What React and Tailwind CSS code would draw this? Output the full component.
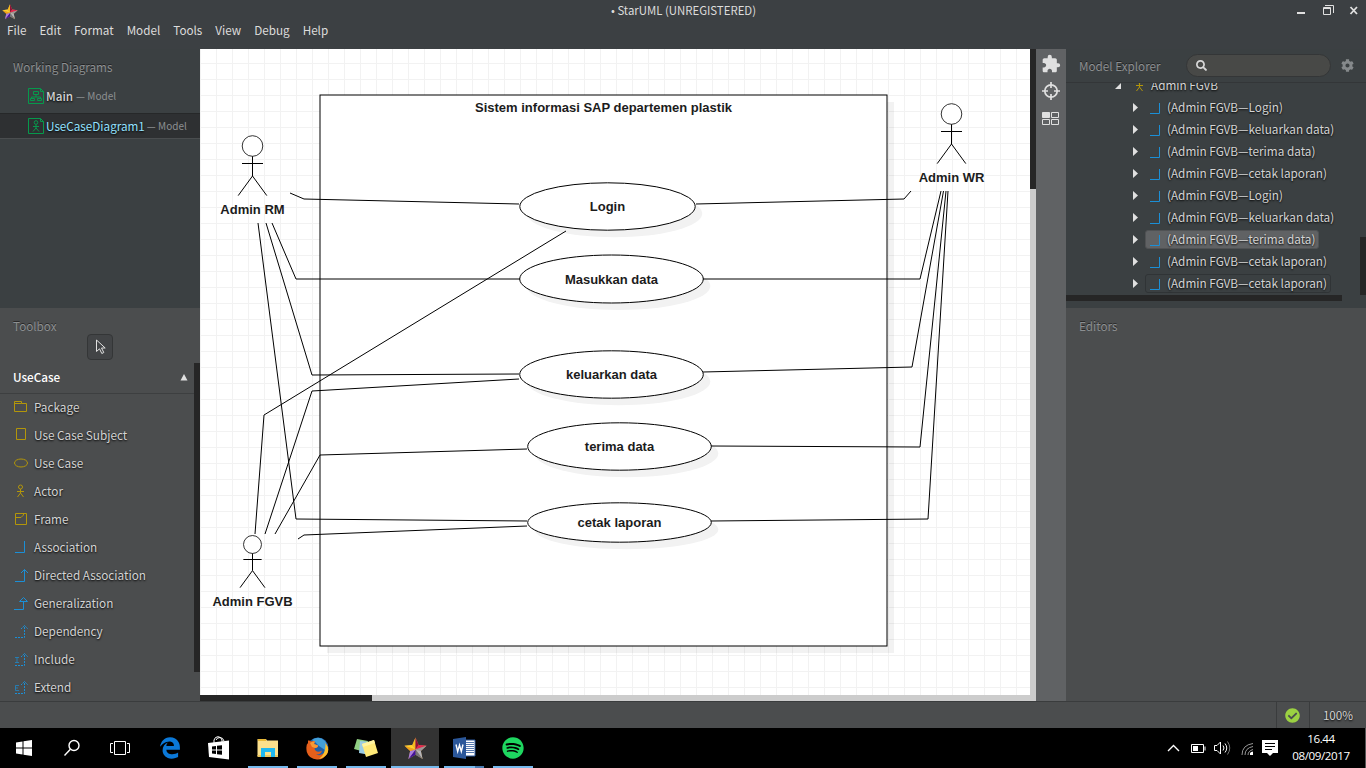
import React from "react";
import { FaSpotify, FaCheckCircle, FaCog, FaSearch } from "react-icons/fa";
import { FaEdgeLegacy } from "react-icons/fa6";
import { MdExtension } from "react-icons/md";

const ui = "font-['Noto_Sans_CJK_JP','Noto_Sans',sans-serif]";

function Star({ size }) {
  return (
    <svg width={size} height={size} viewBox="0 0 24 24">
      <path d="M12 .5L15.400 8.300L23.500 9.200L17.600 14.700L19.400 23L12 18.600L4.600 23L6.400 14.700L.5 9.200L8.600 8.300Z" fill="#b08a4a" />
      <path d="M12 .5V13L8.600 8.300Z" fill="#f5b91f" />
      <path d="M12 .5L15.400 8.300L12 13Z" fill="#8f1038" />
      <path d="M15.400 8.300L23.500 9.200L12 13Z" fill="#e8234f" />
      <path d="M23.500 9.200L17.600 14.700L12 13Z" fill="#9c9599" />
      <path d="M17.600 14.700L19.400 23L12 13Z" fill="#b5b5ba" />
      <path d="M19.400 23L12 18.600V13Z" fill="#74747a" />
      <path d="M12 18.600L4.600 23L12 13Z" fill="#42139c" />
      <path d="M4.600 23L6.400 14.700L12 13Z" fill="#a77be0" />
      <path d="M6.400 14.700L.5 9.200L12 13Z" fill="#f5a018" />
      <path d="M.5 9.200L8.600 8.300L12 13Z" fill="#ffd12b" />
    </svg>
  );
}

function DiagramIcon({ children }) {
  return (
    <svg className="shrink-0" width="16" height="16" viewBox="0 0 16 16" fill="none" stroke="#06994c">
      <path d="M.5 .5H12.5L15.5 3.5V15.5H.5ZM12.5 .5V3.5H15.5" />
      {children}
    </svg>
  );
}

const toolIcons = {
  Package: <path d="M.5 10.5V.5H7.5V2.5H12.5V10.5ZM.5 2.5H7.5" transform="translate(0 1)" />,
  "Use Case Subject": <path d="M2.5 .5H11.5V11.5H2.5Z" />,
  "Use Case": <ellipse cx="7" cy="7" rx="6.5" ry="4" />,
  Actor: (
    <>
      <circle cx="6.5" cy="3" r="2" />
      <path d="M6.5 5V9M3 7.5H10M6.5 9L3.5 13M6.5 9L9.5 13" />
    </>
  ),
  Frame: <path d="M1.5 1.5H12.5V12.5H1.5ZM1.5 5.5H7L9.5 3V1.5" />,
  Association: <path d="M1 12.5H10.5V1" />,
  "Directed Association": <path d="M1 13.5H10.5V1.5M7 5L10.5 1.5L14 5" />,
  Generalization: <path d="M0 13.5H9.5V5.5M5.5 5.5H13.5L9.5 1.5Z" />,
  Dependency: <path d="M1 13.5H10.5V1.5M7 5L10.5 1.5L14 5" strokeDasharray="2 1" />,
  Include: (
    <>
      <path d="M1 13.5H10.5V1.5M7 5L10.5 1.5L14 5" strokeDasharray="2 1" />
      <path d="M1 5.5H5M3 5.5V10.5M1 10.5H5" opacity=".7" />
    </>
  ),
  Extend: (
    <>
      <path d="M1 13.5H10.5V1.5M7 5L10.5 1.5L14 5" strokeDasharray="2 1" />
      <path d="M5 5.5H1.5V10.5H5M1.5 8H4" opacity=".7" />
    </>
  ),
};
const classifiers = ["Package", "Use Case Subject", "Use Case", "Actor", "Frame"];

const tree = [
  "Login", "keluarkan data", "terima data", "cetak laporan", "Login",
  "keluarkan data", "terima data", "cetak laporan", "cetak laporan",
];

function Actor({ x, y, s = 1, label, ly }) {
  return (
    <g>
      <circle cx={x} cy={y} r={10.3 * s} fill="#fff" strokeWidth=".8" />
      <path fill="none" d={`M${x} ${y + 10.3 * s}V${y + 30 * s}M${x - 10.5 * s} ${Math.floor(y + 17.3 * s) + 0.5}H${x + 10.5 * s}M${x - 14.3 * s} ${y + 49.6 * s}L${x} ${y + 30 * s}L${x + 14.3 * s} ${y + 49.6 * s}`} />
      <text x={x} y={ly} stroke="none">{label}</text>
    </g>
  );
}

const cases = [
  ["Login", 607.5, 206.5, 87.7, 23.7],
  ["Masukkan data", 611.5, 279, 91.8, 24],
  ["keluarkan data", 611.5, 374.5, 91.8, 23.7],
  ["terima data", 619.5, 446.5, 91.8, 23.7],
  ["cetak laporan", 619.5, 522.5, 91.8, 19.7],
];

const links = [
  "290,193 304,199 519,204", "272,223 296,279 520,279", "266,223 312,375 519,374",
  "258,223 296,519 527,521", "255,534 264,415 566,231", "265,534 312,391 519,379",
  "275,534 320,455 527,449", "298,539 304,535 527,526", "911,191 904,199 696,204",
  "941,191 920,279 703,279", "943.5,191 912,367 703,372", "946,191 920,447 711,446",
  "948,191 928,519 711,521",
];

function Diagram() {
  return (
    <svg width="830" height="646" viewBox="200 49 830 646" fill="none" stroke="#000" textAnchor="middle" className="block bg-white font-['Liberation_Sans',sans-serif] text-[13px] font-bold">
      <defs>
        <pattern id="grid" x="200" y="47" width="16" height="16" patternUnits="userSpaceOnUse">
          <path d="M0 .5H16M.5 0V16" stroke="#f2f2f2" />
        </pattern>
      </defs>
      <rect x="200" y="49" width="830" height="646" fill="url(#grid)" stroke="none" />
      <rect x="327" y="102" width="567" height="551" fill="#000" fillOpacity=".05" stroke="none" />
      <rect x="320" y="95" width="567" height="551" fill="#fff" />
      <text x="603.5" y="112" fill="#1c1c1c" stroke="none">Sistem informasi SAP departemen plastik</text>
      {cases.map(([name, x, y, rx, ry]) => (
        <g key={name}>
          <ellipse cx={x + 7} cy={y + 7} rx={rx} ry={ry} fill="#f2f2f2" stroke="none" />
          <ellipse cx={x} cy={y} rx={rx} ry={ry} fill="#fff" />
          <text x={x} y={Math.round(y + 4.5)} fill="#1c1c1c" stroke="none">{name}</text>
        </g>
      ))}
      {links.map((p) => <polyline key={p} points={p} />)}
      <g fill="#1c1c1c">
        <Actor x={252.5} y={146} label="Admin RM" ly={214} />
        <Actor x={951.5} y={114} label="Admin WR" ly={182} />
        <Actor x={252.5} y={544.5} s={0.87} label="Admin FGVB" ly={606} />
      </g>
    </svg>
  );
}

function Task({ w, active, open, split, children }) {
  return (
    <div className={`flex h-10 flex-col items-center ${w} ${active ? "bg-[#333]" : ""}`}>
      <div className="flex h-[38px] items-center justify-center pt-0.5">{children}</div>
      {open && (
        <div className={`flex h-0.5 bg-[#76b9ed] ${active ? "w-12" : "w-10"}`}>
          {split && <div className="ml-[31px] w-[9px] bg-[#4a7bb0]" />}
        </div>
      )}
    </div>
  );
}

export default function App() {
  return (
    <div className={`flex h-[768px] w-[1366px] flex-col overflow-hidden bg-[#3c4043] text-[13px] leading-5 text-[#d4d4d4] ${ui}`}>
      <header className="h-[49px]">
        <div className="flex h-5 items-start">
          <div className="w-[70px] pt-1 pl-0.5"><Star size={16} /></div>
          <div className="flex-1 pl-px text-center text-[11.400px] text-[#dcdcdc]">• StarUML (UNREGISTERED)</div>
          <svg className="mt-1" width="70" height="14" viewBox="0 0 70 14" fill="none" stroke="#e0e0e0">
            <path d="M1 9H9" strokeWidth="2" />
            <path d="M27.500 3.500H34.500V10.500H27.500ZM27 4.500H35M29 1.500H37.500V9" />
            <path d="M54.500 3L61 10M61 3L54.500 10" strokeWidth="1.800" />
          </svg>
        </div>
        <nav className="flex gap-[13px] pl-[7px] text-[11.700px] text-[#dcdcdc]">
          {["File", "Edit", "Format", "Model", "Tools", "View", "Debug", "Help"].map((m) => <span key={m}>{m}</span>)}
        </nav>
      </header>

      <main className="flex h-[652px]">
        <aside className="flex w-[200px] flex-col">
          <section className="h-[259px] bg-[#3b4042]">
            <h2 className="h-8 pt-2 pl-[13px] text-[11.700px] text-[#8c8f91] [text-shadow:0_-1px_0_#222]">Working Diagrams</h2>
            <div className="flex h-8 items-center pl-7 pb-0.5">
              <DiagramIcon><path d="M5.500 3.500H10.500V6.500H5.500ZM8 6.500V9M3.500 11V9H12.500V11M2.500 10.500H6.500V12.500H2.500ZM9.500 10.500H13.500V12.500H9.500Z" /></DiagramIcon>
              <span className="-mt-px ml-0.5 text-[11.700px] font-medium [text-shadow:0_1px_2px_#000]">Main</span>
              <span className="ml-[3px] text-[10px] text-[#8c8f91]">— Model</span>
            </div>
            <div className="flex h-[26px] items-center border-y border-t-[#262829] border-b-[#4a4d4f] bg-[#2e3032] pl-7">
              <DiagramIcon><circle cx="8" cy="4.500" r="1.800" /><path d="M8 6.500V10M5 8.500H11M8 10L5 13.500M8 10L11 13.500" /></DiagramIcon>
              <span className="-mt-px ml-0.5 text-[11.700px] text-[#94e2ff] [text-shadow:0_1px_2px_#000]">UseCaseDiagram1</span>
              <span className="ml-[2px] text-[10px] text-[#8c8f91]">— Model</span>
            </div>
          </section>
          <section className="h-[393px] bg-[#4b4d4e]">
            <h2 className="h-[26px] pt-2 pl-[13px] text-[11.700px] text-[#8c8f91] [text-shadow:0_-1px_0_#292929]">Toolbox</h2>
            <div className="flex h-[29px] justify-center">
              <div className="flex h-[26px] w-[26px] items-center justify-center rounded border border-[#343637] bg-[#424446] pl-0.5">
                <svg width="12" height="16" viewBox="0 0 12 16" fill="none" stroke="#e0e0e0"><path d="M1.500 1V12.500L4.500 9.800L6.800 14.500L8.800 13.500L6.500 9H10.200Z" /></svg>
              </div>
            </div>
            <div className="flex h-[338px]">
              <div className="w-[194px]">
                <div className="flex h-[30px] items-center justify-between pr-1.5 pb-0.5 pl-[13px] text-[11.700px] font-medium text-white">
                  UseCase<svg width="8" height="7"><path d="M4 0L7.500 6.500H.5Z" fill="#e0e0e0" /></svg>
                </div>
                <div className="h-px bg-[#3d3f40]" />
                {Object.keys(toolIcons).map((name) => (
                  <div key={name} className="flex h-7 items-center pl-[14px]">
                    <svg className="-mt-px mr-1.5 shrink-0" width="14" height="15" viewBox="0 0 14 15" fill="none" stroke={classifiers.includes(name) ? "#b3960a" : "#1b8fd6"}>{toolIcons[name]}</svg>
                    <span className="-mt-0.5 text-[11.750px] [text-shadow:0_1px_2px_#000]">{name}</span>
                  </div>
                ))}
              </div>
              <div className="h-[309px] w-1.5 bg-[#262626]" />
            </div>
          </section>
        </aside>

        <section className="flex w-[836px] flex-col">
          <div className="flex">
            <Diagram />
            <div className="w-1.5 bg-[#ccc]"><div className="h-[140px] bg-[#262626]" /></div>
          </div>
          <div className="h-1.5 bg-[#ccc]"><div className="h-full w-[172px] bg-[#262626]" /></div>
        </section>

        <div className="flex w-[30px] flex-col items-center bg-[#606264] pt-[5px] text-[#e0e0e0]">
          <MdExtension className="size-5" />
          <svg className="mt-2" width="18" height="18" viewBox="0 0 18 18" fill="none" stroke="#e0e0e0" strokeWidth="1.700">
            <circle cx="9" cy="9" r="6.200" /><path d="M9 0V6M9 12V18M0 9H6M12 9H18" />
          </svg>
          <svg className="mt-3" width="18" height="14" viewBox="0 0 18 14" fill="none" stroke="#e0e0e0">
            <path d="M.5 .5H7.500V5.500H.5Z" fill="#e0e0e0" /><path d="M9.500 .5H16.500V5.500H9.500ZM.5 7.500H7.500V12.500H.5ZM9.500 7.500H16.500V12.500H9.500Z" />
          </svg>
        </div>

        <aside className="flex w-[300px] flex-col">
          <section className="flex h-[259px] flex-col bg-[#3b4042]">
            <div className="flex h-[34px] items-center border-b border-[#333638] pl-[13px]">
              <h2 className="w-[107px] text-[11.700px] text-[#8c8f91] [text-shadow:0_-1px_0_#222]">Model Explorer</h2>
              <div className="flex h-[23px] w-[145px] items-center rounded-full border border-[#343637] bg-[#484947] pl-[9px] text-[#d8d8d8]"><FaSearch className="size-[11px]" /></div>
              <FaCog className="ml-2.5 size-[13px] text-[#85898b]" />
            </div>
            <div className="flex h-[212px] overflow-hidden">
              <div className="w-[294px] text-[11.750px] [text-shadow:0_1px_2px_#000]">
                <div className="-mt-[9px] flex h-[22px] items-center pl-[49px]">
                  <svg className="mt-0.5" width="6" height="6"><path d="M6 0V6H0Z" fill="#e0e0e0" /></svg>
                  <svg className="ml-[12px] mr-[6px]" width="12" height="14" fill="none" stroke="#b3960a">{toolIcons.Actor}</svg>
                  Admin FGVB
                </div>
                {tree.map((t, i) => (
                  <div key={i} className="flex h-[22px] items-center pl-[67px]">
                    <svg width="5" height="9"><path d="M0 0L5 4.500L0 9Z" fill="#e0e0e0" /></svg>
                    <div className={`mt-px ml-[7px] flex h-[19px] items-center rounded-[3px] border pr-[3px] pb-px pl-1 ${i === 6 ? "border-[#505254] bg-[#606264]" : i === 8 ? "border-[#303436]" : "border-transparent"}`}>
                      <svg className="mt-px mr-[6px]" width="11" height="12" fill="none" stroke="#1b8fd6"><path d="M0 11.500H9.500V1" /></svg>
                      {`(Admin FGVB—${t})`}
                    </div>
                  </div>
                ))}
              </div>
              <div className="flex w-1.5 items-end"><div className="h-[58px] w-full bg-[#262626]" /></div>
            </div>
            <div className="h-1.5 w-[276px] bg-[#262626]" />
          </section>
          <section className="h-[393px] bg-[#4b4d4e]">
            <h2 className="pt-2 pl-[13px] text-[11.700px] text-[#8c8f91] [text-shadow:0_-1px_0_#292929]">Editors</h2>
          </section>
        </aside>
      </main>

      <footer className="flex h-[27px] justify-end border-t border-[#3a3c3d] bg-[#4b4d4e]">
        <div className="flex w-[33px] items-center justify-center border-l border-[#3a3c3d] pr-px"><FaCheckCircle className="size-[15px] text-[#9bd142]" /></div>
        <div className="flex w-[57px] items-center justify-center border-l border-[#3a3c3d] pb-px text-[11.700px]"><span className="[text-shadow:0_1px_2px_#000]">100%</span></div>
      </footer>

      <div className="flex h-10 bg-black">
        <Task w="w-12"><svg width="16" height="16" fill="#fff"><path d="M0 2.500L6.500 1.500V7.500H0ZM7.500 1.300L16 0V7.500H7.500ZM0 8.500H6.500V14.500L0 13.500ZM7.500 8.500H16V16L7.500 14.700Z" /></svg></Task>
        <Task w="w-12"><svg width="18" height="18" fill="none" stroke="#fff" strokeWidth="1.400"><circle cx="11" cy="6.500" r="5" /><path d="M7.400 10.200L1.500 16.500" /></svg></Task>
        <Task w="w-12"><svg width="20" height="16" fill="none" stroke="#fff"><path d="M4.500 1.500H15.500V14.500H4.500ZM3 3.500H.5V12.500H3M17 3.500H19.500V12.500H17" /></svg></Task>
        <Task w="w-[51px]"><FaEdgeLegacy className="size-[22px] text-[#0b78d7]" /></Task>
        <Task w="w-12">
          <svg width="22" height="24" viewBox="0 0 22 24"><path d="M0 7L21 4.500V23.500L1 21Z" fill="#fff" /><path d="M6 8V4Q7 .7 10 .7T14 4V6M8 4Q9 1.500 12 1.500T16 5" fill="none" stroke="#fff" /><path d="M4 10.500L8 10V13.500H4ZM9 9.800L14 9.200V13.500H9ZM4 14.500H8V18L4 17.600ZM9 14.500H14V18.700L9 18.200Z" fill="#000" /></svg>
        </Task>
        <Task w="w-[50px]" open>
          <svg width="22" height="20" viewBox="0 0 22 20"><path d="M.5 1H9L10 2.500H21V18H.5Z" fill="#fbe08c" /><path d="M1 1H9V3H1Z" fill="#e9b938" /><path d="M.5 17H21V19H.5Z" fill="#eec85d" /><path d="M4 19V10H18V19H14V14H8V19Z" fill="#1fb8ef" /></svg>
        </Task>
        <Task w="w-12" open>
          <svg width="23" height="23" viewBox="0 0 23 23">
            <circle cx="12" cy="11" r="10.500" fill="#1f5fa8" />
            <path d="M6 3Q13-2 19 4Q22 8 19 13L13 9L9 5Z" fill="#43a0d8" />
            <path d="M2 3.500Q4 3 5 4.500Q7 3.500 9 4.500L8 7L12 8.500Q12 10.500 9 11Q8 11.500 9.500 13.500Q12 16 16 13.500Q15 18 10 17.500Q15 20 19 15Q21 11 19.500 6Q24 12 21 17Q17 23 11 22.500Q3 22 .8 15Q-.5 8 2 6Z" fill="#e55f1b" />
            <path d="M19.500 6Q24 12 21 17Q18 21 13 22Q20 17 19.500 6Z" fill="#fbc02d" />
            <path d="M4 6Q6 4 9 4.500L8 7L12 8.500Q12 10.500 9 11L6 10Z" fill="#f79a35" />
          </svg>
        </Task>
        <Task w="w-[50px]" open>
          <svg width="24" height="20" viewBox="0 0 24 20"><path d="M3 1L14 3L11 14L0 11Z" fill="#90cf83" /><path d="M6 3L15 4L16 17L5 15Z" fill="#9bcce5" /><path d="M8 6L20 2L24 15L12 19Z" fill="#ffe978" /><path d="M8 6L20 2L21 5L9 9Z" fill="#fff3a0" /></svg>
        </Task>
        <Task w="w-12" active open><Star size={23} /></Task>
        <Task w="w-[50px]" open split>
          <svg width="23" height="22" viewBox="0 0 23 22"><path d="M11 3H22V19H11Z" fill="#fff" stroke="#2b579a" /><path d="M13 5.500H21M13 7.500H21M13 9.500H21M13 11.500H21M13 13.500H21M13 15.500H21" stroke="#2b579a" strokeWidth=".8" /><path d="M0 2L13 0V22L0 20Z" fill="#2b579a" /><path d="M3 7.500L4.700 14.500L6.500 8L8.300 14.500L10 7.500" fill="none" stroke="#fff" strokeWidth="1.400" /></svg>
        </Task>
        <Task w="w-[48px]" open><FaSpotify className="size-[22px] text-[#1ed760]" /></Task>
        <div className="flex-1" />
        <svg className="mt-2" width="116" height="24" viewBox="-1 0 116 24" fill="none" stroke="#fff">
          <path d="M5 15L10.500 9.500L16 15" strokeWidth="1.400" />
          <path d="M28.500 8.500H40.500V16.500H28.500ZM42 10.500V14.500" /><path d="M30 10H35V15H30Z" fill="#fff" stroke="none" />
          <path d="M51.500 9.500H54L57.500 6V18L54 14.500H51.500ZM60 9.500Q62 12 60 14.500M62 7.500Q65.500 12 62 16.500" /><path d="M64.500 5.500Q69 12 64.500 18.500" stroke="#777" />
          <g transform="translate(0 1)"><path d="M79 18Q79 8 90 6.500M82 18Q82 11 90 9.500M85 18Q85 14 90 12.500" stroke="#999" /><path d="M87 18V16Q88 14.500 90 14.500V18Z" fill="#fff" stroke="none" /></g>
          <path d="M99 4H115V17H110L107 20L104 17H99Z" fill="#fff" stroke="none" /><path d="M102 7.500H112M102 10.500H112M102 13.500H109" stroke="#000" />
        </svg>
        <div className="mr-px w-[86px] pt-[2px] text-center font-['Open_Sans',sans-serif] text-[11.600px] leading-[17px] tracking-[-0.4px] text-white"><div>16.44</div><div>08/09/2017</div></div>
        <div className="w-px bg-[#555]" />
      </div>
    </div>
  );
}
